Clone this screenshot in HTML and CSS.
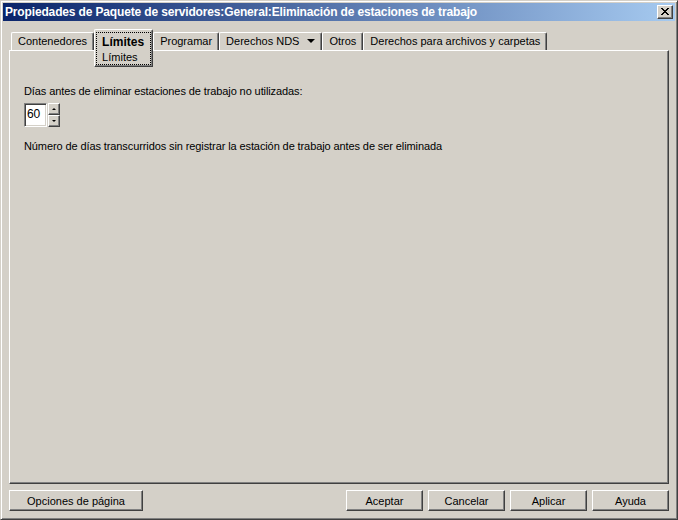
FILE: index.html
```html
<!DOCTYPE html>
<html lang="es">
<head>
    <meta charset="UTF-8">
    <title>Propiedades de Paquete de servidores</title>
    <link rel="stylesheet" href="styles.css">
</head>
<body>
    <div class="window">
        <div class="titlebar">
            <span class="title">Propiedades de Paquete de servidores:General:Eliminación de estaciones de trabajo</span>
            <span class="close-btn">
                <svg width="8" height="7" viewBox="0 0 8 7" shape-rendering="crispEdges">
                    <path fill="#000" d="M0 0h2v1H0z M6 0h2v1H6z M1 1h2v1H1z M5 1h2v1H5z M2 2h4v1H2z M3 3h2v1H3z M2 4h4v1H2z M1 5h2v1H1z M5 5h2v1H5z M0 6h2v1H0z M6 6h2v1H6z"/>
                </svg>
            </span>
        </div>

        <div class="content">
            <div class="tabs">
                <div class="tab">Contenedores</div>
                <div class="tab tab-active">
                    <div class="focus">
                        <span class="tab-bold">Límites</span>
                        <span>Límites</span>
                    </div>
                </div>
                <div class="tab">Programar</div>
                <div class="tab">Derechos NDS <span class="arrow"></span></div>
                <div class="tab">Otros</div>
                <div class="tab">Derechos para archivos y carpetas</div>
            </div>

            <div class="panel">
                <div class="field-label">Días antes de eliminar estaciones de trabajo no utilizadas:</div>
                <div class="spinner">
                    <div class="spin-input">60</div>
                    <div class="spin-buttons">
                        <span class="spin-btn"><span class="spin-up"></span></span>
                        <span class="spin-btn"><span class="spin-down"></span></span>
                    </div>
                </div>
                <div class="field-help">Número de días transcurridos sin registrar la estación de trabajo antes de ser eliminada</div>
            </div>

            <div class="button-row">
                <button class="btn btn-wide">Opciones de página</button>
                <div class="button-group">
                    <button class="btn">Aceptar</button>
                    <button class="btn">Cancelar</button>
                    <button class="btn">Aplicar</button>
                    <button class="btn">Ayuda</button>
                </div>
            </div>
        </div>
    </div>
</body>
</html>
```

FILE: styles.css
```css
:root {
    --face: #d4d0c8;
    --light: #ffffff;
    --shadow: #808080;
    --dark: #404040;
}

* {
    box-sizing: border-box;
}

body {
    margin: 0;
    background-color: var(--face);
    font-family: "Liberation Sans", Arial, sans-serif;
    font-size: 11px;
    color: #000;
}

.window {
    width: 678px;
    height: 520px;
    display: flex;
    flex-direction: column;
    padding: 2px;
    border: 1px solid;
    border-color: var(--face) var(--dark) var(--dark) var(--face);
    box-shadow: inset 1px 1px var(--light), inset -1px -1px var(--shadow);
}

.titlebar {
    height: 18px;
    display: flex;
    align-items: center;
    justify-content: space-between;
    padding: 0 2px;
    background: linear-gradient(to right, #0a246a, #a6caf0);
    color: #fff;
    font-size: 12px;
    font-weight: bold;
    letter-spacing: -0.15px;
}

.close-btn {
    width: 16px;
    height: 14px;
    display: flex;
    align-items: center;
    justify-content: center;
    background-color: var(--face);
    border: 1px solid;
    border-color: var(--light) var(--dark) var(--dark) var(--light);
    box-shadow: inset -1px -1px var(--shadow);
    padding: 0 1px 1px 0;
}

.content {
    flex: 1;
    display: flex;
    flex-direction: column;
    padding: 8px 6px 6px;
}

/* tab strip */
.tabs {
    display: flex;
    align-items: flex-start;
    height: 21px;
    padding-left: 2px;
}

.tab {
    height: 18px;
    margin-top: 3px;
    display: flex;
    align-items: center;
    padding: 0 6px 1px;
    border-top: 1px solid var(--light);
    border-left: 1px solid var(--light);
    border-right: 1px solid var(--dark);
    box-shadow: inset -1px 0 var(--shadow);
    border-top-left-radius: 2px;
    border-top-right-radius: 2px;
    white-space: nowrap;
}

.tab-active {
    position: relative;
    z-index: 1;
    height: 38px;
    margin-top: 0;
    align-items: stretch;
    padding: 2px 1px 1px;
    background-color: var(--face);
    border-bottom: 1px solid var(--dark);
    box-shadow: inset -1px -1px var(--shadow);
}

.focus {
    display: flex;
    flex-direction: column;
    padding: 2px 6px 0 5px;
    border: 1px dotted #000;
    line-height: 15px;
}

.tab-bold {
    font-weight: bold;
    font-size: 12px;
}

.arrow {
    width: 0;
    height: 0;
    margin-left: 8px;
    border-left: 4px solid transparent;
    border-right: 4px solid transparent;
    border-top: 4px solid #000;
}

/* page */
.panel {
    flex: 1;
    padding: 34px 14px 0;
    border: 1px solid;
    border-color: var(--light) var(--dark) var(--dark) var(--light);
    box-shadow: inset -1px -1px var(--shadow);
    letter-spacing: -0.1px;
}

.field-label,
.field-help {
    line-height: 13px;
}

.spinner {
    display: flex;
    margin: 5px 0 13px;
}

.spin-input {
    width: 23px;
    height: 24px;
    padding: 3px 0 0 2px;
    background-color: #fff;
    border: 1px solid;
    border-color: var(--shadow) var(--light) var(--light) var(--shadow);
    box-shadow: inset 1px 1px var(--dark), inset -1px -1px var(--face);
    font-size: 12px;
}

.spin-buttons {
    display: flex;
    flex-direction: column;
    margin-left: 1px;
}

.spin-btn {
    width: 12px;
    height: 12px;
    display: flex;
    align-items: center;
    justify-content: center;
    border: 1px solid;
    border-color: var(--light) var(--dark) var(--dark) var(--light);
    box-shadow: inset -1px -1px var(--shadow);
}

.spin-up,
.spin-down {
    width: 0;
    height: 0;
    border-left: 2px solid transparent;
    border-right: 2px solid transparent;
}

.spin-up {
    border-bottom: 2px solid #000;
}

.spin-down {
    border-top: 2px solid #000;
}

/* dialog buttons */
.button-row {
    display: flex;
    justify-content: space-between;
    margin-top: 6px;
}

.button-group {
    display: flex;
    gap: 5px;
}

.btn {
    width: 77px;
    height: 21px;
    padding: 0;
    background-color: var(--face);
    border: 1px solid;
    border-color: var(--light) var(--dark) var(--dark) var(--light);
    box-shadow: inset -1px -1px var(--shadow);
    font-family: inherit;
    font-size: 11px;
    color: #000;
}

.btn-wide {
    width: 134px;
}
```
